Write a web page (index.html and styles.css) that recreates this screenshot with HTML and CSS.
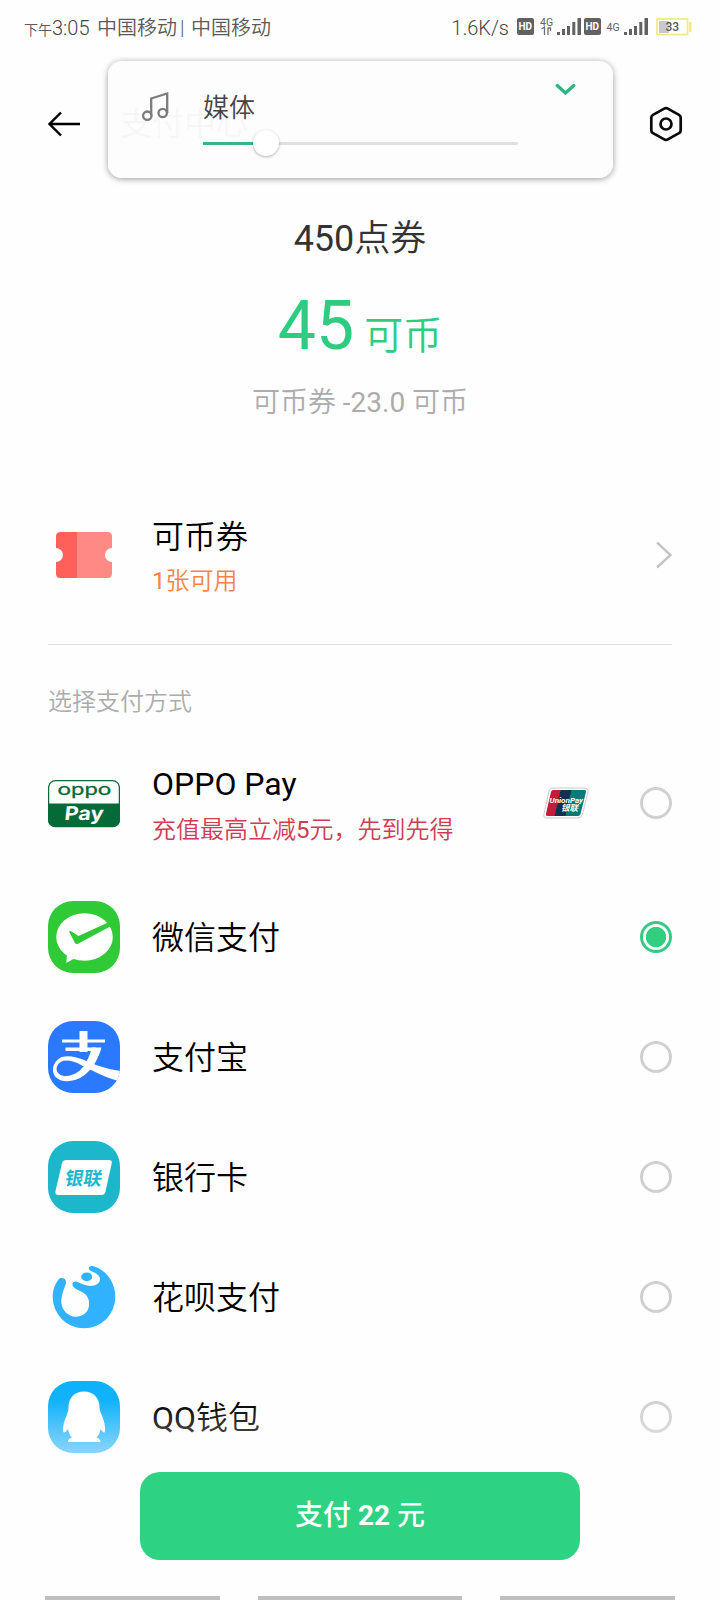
FILE: index.html
```html
<!DOCTYPE html>
<html lang="zh-CN">
<head>
<meta charset="utf-8">
<title>支付中心</title>
<link rel="stylesheet" href="styles.css">
</head>
<body>
<div class="screen">
  <div class="status">
    <span class="ampm">下午</span><span class="clock">3:05</span>
    <span class="carrier">中国移动</span><span class="bar">|</span><span class="carrier2">中国移动</span>
    <span class="speed">1.6K/s</span>
    <svg class="signals" width="178" height="24" viewBox="514 14 178 24">
      <g fill="#626262">
        <rect x="517" y="18" width="17" height="17" rx="2"/>
        <rect x="584" y="18" width="17" height="17" rx="2"/>
        <path d="M557 32h3v3h-3zM562 29h3v6h-3zM567 26h3v9h-3zM572.300 22h3v13h-3zM577.500 18h3.500v17h-3.500z"/>
        <path d="M624 32h3v3h-3zM629 29h3v6h-3zM634 26h3v9h-3zM639.300 22h3v13h-3zM644.500 18h3.500v17h-3.500z"/>
        <text x="540" y="25.500" font-size="10.500">4G</text>
        <text x="606.500" y="31" font-size="10.500">4G</text>
      </g>
      <path d="M541.500 29l3-2v8M550.500 31v-3h-2.500v7" fill="none" stroke="#707070" stroke-width="1.300"/>
      <g fill="#fff" font-size="10" font-weight="700"><text x="518.500" y="30">HD</text><text x="585.500" y="30">HD</text></g>
      <rect x="657" y="19" width="30.500" height="15.500" fill="#fff" stroke="#f3ea86" stroke-width="1.800"/>
      <rect x="689" y="22" width="2.500" height="10" fill="#f3ea86"/>
      <rect x="659" y="21" width="10" height="12" fill="#c9c9c9"/>
      <text x="665.500" y="31" font-size="12" font-weight="500" fill="#555">33</text>
    </svg>
  </div>

  <header class="header">
    <svg class="back" width="32" height="26" viewBox="0 0 32 26"><path d="M32 13H2M13 1.500L1.500 13L13 24.500" fill="none" stroke="#000" stroke-width="2.400"/></svg>
    <h1 class="title">支付中心</h1>
    <svg class="settings" width="34" height="36" viewBox="0 0 34 36" fill="none" stroke="#0a0a0a"><path d="M15.200 2.600Q17 1.600 18.800 2.600L30 8.800Q31.700 9.800 31.700 11.800V24.200Q31.700 26.200 30 27.200L18.800 33.400Q17 34.400 15.200 33.400L4 27.200Q2.300 26.200 2.300 24.200V11.800Q2.300 9.800 4 8.800Z" stroke-width="2.700"/><circle cx="17" cy="18" r="5.500" stroke-width="2.700"/></svg>
    <div class="volume">
      <svg class="note" width="28" height="32" viewBox="0 0 28 32" fill="none" stroke="#7b7b7b" stroke-width="2.300"><circle cx="6.300" cy="24.700" r="4.200"/><circle cx="21.700" cy="22" r="4.200"/><path d="M10.200 24.500V7.500L26.200 2.500V22"/></svg>
      <div class="media">
        <div class="media-label">媒体</div>
        <div class="track"><div class="level"></div><div class="thumb"></div></div>
      </div>
      <svg class="expand" width="21" height="14" viewBox="0 0 21 14"><path d="M2.200 2.500L10.500 10L18.800 2.500" fill="none" stroke="#2db681" stroke-width="3.300" stroke-linecap="round"/></svg>
    </div>
  </header>

  <section class="summary">
    <div class="product"><span class="latin">450</span>点券</div>
    <div class="price"><span class="amount">45</span><span class="unit">可币</span></div>
    <div class="discount">可币券 <span class="latin">-23.0</span> 可币</div>
  </section>

  <main class="content">
    <div class="row coupon">
      <svg class="icon" width="72" height="72" viewBox="0 0 72 72"><path d="M29 13H12.500Q8 13 8 17.500V29a7 7 0 0 1 0 14V54.500Q8 59 12.500 59H29Z" fill="#ff6059"/><path d="M29 13H59.500Q64 13 64 17.500V29a7 7 0 0 0 0 14V54.500Q64 59 59.500 59H29Z" fill="#ff8a85"/></svg>
      <div class="label"><div class="name">可币券</div><div class="note-text orange"><span class="latin">1</span>张可用</div></div>
      <svg class="arrow" width="18" height="28" viewBox="0 0 18 28"><path d="M3 1.500L16.500 14L3 26.500" fill="none" stroke="#c4c4c4" stroke-width="2.400"/></svg>
    </div>
    <h2 class="section-title">选择支付方式</h2>

    <div class="row oppo">
      <svg class="icon" width="72" height="72" viewBox="0 0 72 72">
        <rect x=".6" y="13.600" width="70.800" height="46" rx="7" fill="#fff" stroke="#0a6b37" stroke-width="1.300"/>
        <path d="M0 36.500H72V52Q72 60 64 60H8Q0 60 0 52Z" fill="#046a38"/>
        <text transform="translate(9.500 28) scale(1.560 1)" font-family="Lato" font-size="17" fill="#046a38" stroke="#046a38" stroke-width=".25" textLength="34.500" lengthAdjust="spacingAndGlyphs">oppo</text>
        <text transform="translate(16 53) skewX(-6)" font-family="Inter" font-weight="700" font-size="19" fill="#fff" textLength="39" lengthAdjust="spacingAndGlyphs">Pay</text>
      </svg>
      <div class="label"><div class="name latin">OPPO Pay</div><div class="note-text red">充值最高立减<span class="latin">5</span>元，先到先得</div></div>
      <svg class="unionpay" width="46" height="32" viewBox="0 0 46 32">
        <path d="M9 1H41Q46 1 45 5L39.500 27Q38.500 31 35 31H4Q0 31 1 27L6 4Q7 1 9 1Z" fill="#fff" stroke="#bbb" stroke-width=".8"/>
        <path d="M10 3H18L12 29H4.500Q2.500 29 3 26.500L8 5Q8.500 3 10 3Z" fill="#c41c38"/>
        <path d="M17.500 3H29L23 29H11.500Z" fill="#15304f"/>
        <path d="M28.500 3H41Q43.500 3 43 5L37.500 27Q37 29 35 29H22.500Z" fill="#087b78"/>
        <text x="6.500" y="15.500" font-size="8" font-weight="700" font-style="italic" fill="#fff" textLength="33.500" lengthAdjust="spacingAndGlyphs">UnionPay</text>
        <text x="18" y="24" font-size="8.500" font-weight="700" font-style="italic" fill="#fff">银联</text>
      </svg>
      <span class="radio"></span>
    </div>

    <div class="row">
      <svg class="icon" width="72" height="72" viewBox="0 0 72 72"><rect width="72" height="72" rx="25" fill="#2fca36"/><ellipse cx="36.500" cy="36" rx="28.300" ry="23.700" fill="#fff"/><path d="M19 53L18.300 62L29 56Z" fill="#fff"/><path d="M21 30.500Q22.200 29.500 24 30.800L30.500 35L60 21.500L64 24.500L30.500 42.500Q28 44 26.700 41.500Z" fill="#2fca36"/></svg>
      <div class="label"><div class="name">微信支付</div></div><span class="radio checked"></span>
    </div>
    <div class="row">
      <svg class="icon" width="72" height="72" viewBox="0 0 72 72"><defs><clipPath id="blue"><rect width="72" height="72" rx="25"/></clipPath></defs><g clip-path="url(#blue)"><rect width="72" height="72" fill="#2b79ff"/><path d="M31.500 10H39.500V31H31.500ZM14 18.500H57V21.500H14ZM17.500 26.500H48V30H17.500Z" fill="#fff"/><path d="M43.800 26.500H53.500C51 36 45 48 36 54.500C27 61 14 62.500 7.500 56C2 49 6 38.500 15 35.800C26 33 40 41 51 45Q61 48.500 74 50.200L69 59.500C58 57 45 49.500 33 44C24 39 14 37.500 10 43.500C6 50 11 55.500 19 55C32 54 40 42 43.800 26.500Z" fill="#fff"/></g></svg>
      <div class="label"><div class="name">支付宝</div></div><span class="radio"></span>
    </div>
    <div class="row">
      <svg class="icon" width="72" height="72" viewBox="0 0 72 72"><rect width="72" height="72" rx="25" fill="#1db7cb"/><path d="M18.500 19H61Q64.500 19 63.700 22.500L57.500 50.500Q56.700 54 53.500 54H10.500Q6.500 54 7.500 50L14 22.300Q15 19 18.500 19Z" fill="#fff"/><text transform="translate(16 43.500) skewX(-10)" font-size="18.500" font-weight="700" fill="#1db7cb">银联</text></svg>
      <div class="label"><div class="name">银行卡</div></div><span class="radio"></span>
    </div>
    <div class="row">
      <svg class="icon" width="72" height="72" viewBox="0 0 72 72"><path d="M44.500 5C58 8.500 67.300 21 67.300 36A31.300 31.300 0 0 1 4.700 36C4.700 29 7 23 10.500 18.500C13 15.500 19 17.500 18 22C17.500 25 13.500 32 13.300 40C13.300 49 20 56 28.500 55.700C37 55 42 49 41 41C40.500 34 35 31 31 29.500C28 28 26 27 24.800 25C23.500 22 26 19.500 29 20.800C34 23 40 26 46 24.500C52 23 53.500 18 50.500 14.500C48 11.500 44.500 11 42 9.500C39.500 7.500 41 4.300 44.500 5Z" fill="#31b2ff"/><ellipse cx="38.700" cy="15.700" rx="5.500" ry="4.300" fill="#31b2ff"/></svg>
      <div class="label"><div class="name">花呗支付</div></div><span class="radio"></span>
    </div>
    <div class="row">
      <svg class="icon" width="72" height="72" viewBox="0 0 72 72"><defs><linearGradient id="sky" x2="0" y2="1"><stop stop-color="#0fb1fa"/><stop offset=".35" stop-color="#12b3fa"/><stop offset="1" stop-color="#38b8fa"/></linearGradient></defs><rect width="72" height="72" rx="25" fill="url(#sky)"/><path d="M36 10.500C45.500 10.500 51.500 17 51.500 26C51.500 30 53 32 54.500 36C57 42 57.500 48 56.800 51C56 52.500 54 50 52.500 48C52 52 50.500 54.500 48.500 56.500Q52.500 58 52.500 61H20Q19.500 58 24 56.500C22 54.500 20.500 52 20 48C18.500 50 16.500 52.500 15.200 51C14.500 47 15.500 42 18 36C19.500 32 20.500 30 20.500 26C20.500 17 26.500 10.500 36 10.500Z" fill="#fff"/></svg>
      <div class="label"><div class="name"><span class="latin">QQ</span>钱包</div></div><span class="radio"></span>
    </div>
  </main>

  <footer class="footer">
    <button class="pay">支付 <b>22</b> 元</button>
    <div class="nav"><span></span><span class="home"></span><span></span></div>
  </footer>
</div>
</body>
</html>
```
FILE: styles.css
```css
* { box-sizing: border-box; }
body {
  margin: 0;
  background: #fefefe;
  color: #000;
  font-family: Roboto, "Noto Sans CJK SC", sans-serif;
}
.screen {
  position: relative;
  width: 720px;
  height: 1600px;
  overflow: hidden;
  display: flex;
  flex-direction: column;
}
.status {
  height: 56px;
  flex: none;
  display: flex;
  align-items: center;
  padding-left: 24px;
  font-size: 20px;
  font-weight: 350;
  line-height: 24px;
  color: #5a5a5a;
  white-space: nowrap;
}
.ampm { width: 28px; font-size: 14px; padding-top: 3px; }
.clock { width: 45px; }
.carrier { width: 83px; }
.bar { width: 11px; }
.clock, .speed { color: #444; }
.speed { margin-left: auto; margin-right: 5px; }
.signals { flex: none; margin-right: 28px; margin-top: -4px; font-weight: 400; }

.header {
  position: relative;
  flex: none;
  height: 136px;
  display: flex;
  align-items: center;
  padding: 0 37px 0 48px;
}
.title { margin: 0 0 0 40px; font-size: 32px; font-weight: 350; line-height: 40px; }
.settings { margin-left: auto; }
.volume {
  position: absolute;
  left: 108px;
  top: 5px;
  width: 505px;
  height: 117px;
  display: flex;
  align-items: flex-start;
  padding: 22px 37px 0 33px;
  border-radius: 14px;
  background: rgba(253, 253, 253, .975);
  box-shadow: 0 1px 6px rgba(0, 0, 0, .4);
}
.note { margin-top: 8px; }
.media { width: 315px; margin-left: 34px; }
.media-label { font-size: 26px; font-weight: 350; line-height: 50px; height: 59px; color: #444; }
.track { position: relative; height: 3px; background: #dfdfdf; border-radius: 2px; }
.level { width: 50px; height: 3px; background: #3cb585; }
.thumb {
  position: absolute;
  left: 50px;
  top: -12px;
  width: 26px;
  height: 26px;
  border-radius: 50%;
  background: #fff;
  box-shadow: 0 1px 3px rgba(0, 0, 0, .3);
}
.expand { margin-left: auto; }

.summary {
  flex: none;
  height: 300px;
  display: flex;
  flex-direction: column;
  align-items: center;
  padding-top: 23px;
}
.product { font-size: 36px; font-weight: 350; line-height: 48px; color: #333; }
.price { display: flex; align-items: baseline; gap: 10px; margin-top: 19px; line-height: 88px; color: #2ecc80; }
.amount { font-size: 68px; font-weight: 400; }
.unit { font-size: 39px; font-weight: 350; }
.discount { margin-top: 3px; font-size: 28px; font-weight: 350; line-height: 40px; color: #acacac; }

.content { flex: none; padding: 0 48px; }
.row { height: 120px; display: flex; align-items: center; }
.icon { flex: none; }
.icon, .unionpay, .signals { font-family: Roboto, "Noto Sans CJK SC", sans-serif; }
.label { flex: 1; margin-left: 32px; padding-top: 2px; white-space: nowrap; }
.name { font-size: 32px; line-height: 46px; font-weight: 350; }
.latin { font-weight: 400; }
.note-text { font-size: 24px; line-height: 34px; margin-top: 4px; font-weight: 350; }
.orange { color: #f28446; }
.red { color: #cf3c53; }
.coupon { height: 153px; padding-bottom: 26px; border-bottom: 1px solid #dedede; }
.section-title { margin: 0; height: 85px; padding-top: 40px; font-size: 24px; line-height: 34px; font-weight: 350; color: #acacac; }
.oppo { height: 147px; padding-bottom: 2px; }
.oppo .label { padding-top: 2px; }
.oppo .note-text { margin-top: 6px; }
.unionpay { margin-right: 51px; }
.radio {
  flex: none;
  width: 32px;
  height: 32px;
  border: 3px solid #d0d0d0;
  border-radius: 50%;
}
.checked { border-color: #38c983; background: radial-gradient(circle, #30cf80 9.800px, #fefefe 10.400px); }

.footer {
  position: absolute;
  inset: 1400px 0 0;
  display: flex;
  flex-direction: column;
  align-items: center;
  padding-top: 72px;
  background: linear-gradient(rgba(254, 254, 254, 0), #fefefe 130px);
}
.pay {
  width: 440px;
  height: 88px;
  border: 0;
  border-radius: 20px;
  background: #2dd282;
  color: #fff;
  font: 500 28px/40px Roboto, "Noto Sans CJK SC", sans-serif;
}
.nav { margin-top: auto; width: 630px; height: 4px; display: flex; justify-content: space-between; }
.nav span { width: 175px; background: #bfbfbf; }
.nav .home { width: 204px; }
```
